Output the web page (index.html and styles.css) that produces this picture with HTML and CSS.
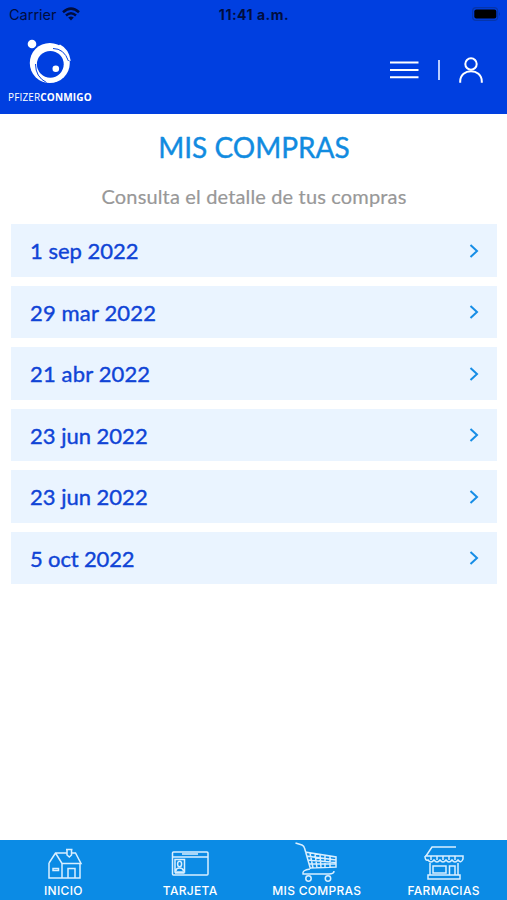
FILE: index.html
```html
<!DOCTYPE html>
<html lang="es">
<head>
<meta charset="utf-8">
<title>Mis compras</title>
<link rel="stylesheet" href="styles.css">
</head>
<body>
<header class="header">
  <div class="status">
    <div class="carrier"><span>Carrier</span>
      <svg width="18" height="14" viewBox="0 0 18 14"><g fill="none" stroke="currentColor" stroke-width="2.5"><path d="M1 5.2Q9-2 17 5.2"/><path d="M4 8.5Q9 4 14 8.5"/></g><path d="M6.2 10.6Q9 8.2 11.8 10.6L9 13.5Z" fill="currentColor"/></svg>
    </div>
    <time class="clock">11:41 a.m.</time>
    <svg class="battery" width="29" height="14" viewBox="0 0 29 14"><rect x=".6" y=".6" width="25" height="12.8" rx="3.5" fill="none" stroke="#0635aa" stroke-width="1.2"/><rect x="2.3" y="2.5" width="22" height="9" rx="2" fill="#000"/><path d="M27 5v4q2-2 0-4" fill="#0635aa"/></svg>
  </div>
  <div class="toolbar">
    <div class="brand">
      <svg width="46" height="48" viewBox="0 0 46 48"><circle cx="6" cy="6" r="4.3" fill="#fff"/><circle cx="23.8" cy="25" r="20" fill="#fff"/><circle cx="24.3" cy="26.3" r="13.4" fill="#003fe0"/><path d="M27 10.5Q38 10.500 42.500 23" fill="none" stroke="#003fe0" stroke-width="1"/><path d="M34 6.500Q43 11 44.800 23L42.800 22Q40 13 32 8Z" fill="#fff"/><path d="M9.500 26Q9.500 39 20.500 44.500" fill="none" stroke="#003fe0" stroke-width="1"/><circle cx="29.800" cy="30.800" r="3.300" fill="#fff"/></svg>
      <div class="brand-name">PFIZER<b>CONMIGO</b></div>
    </div>
    <div class="actions">
      <svg width="30" height="20" viewBox="0 0 30 20"><path d="M1 2.5H29.5M1 10H29.5M1 17.3H29.5" stroke="#fff" stroke-width="2"/></svg>
      <span class="divider"></span>
      <svg width="26" height="28" viewBox="0 0 26 28" fill="none" stroke="#fff" stroke-width="2"><circle cx="13" cy="8" r="5.7"/><path d="M2.2 26.7V25.5C2.2 11.8 23.8 11.8 23.8 25.5V26.7"/></svg>
    </div>
  </div>
</header>
<main class="content">
  <h1 class="title">MIS COMPRAS</h1>
  <p class="subtitle">Consulta el detalle de tus compras</p>
  <ul class="purchases">
    <li class="purchase"><span>1 sep 2022</span><svg class="chevron" viewBox="0 0 10 16"><path d="M1.5 2L8 8L1.5 14"/></svg></li>
    <li class="purchase"><span class="wide">29 mar 2022</span><svg class="chevron" viewBox="0 0 10 16"><path d="M1.5 2L8 8L1.5 14"/></svg></li>
    <li class="purchase"><span class="wide">21 abr 2022</span><svg class="chevron" viewBox="0 0 10 16"><path d="M1.5 2L8 8L1.5 14"/></svg></li>
    <li class="purchase"><span>23 jun 2022</span><svg class="chevron" viewBox="0 0 10 16"><path d="M1.5 2L8 8L1.5 14"/></svg></li>
    <li class="purchase"><span>23 jun 2022</span><svg class="chevron" viewBox="0 0 10 16"><path d="M1.5 2L8 8L1.5 14"/></svg></li>
    <li class="purchase"><span class="narrow">5 oct 2022</span><svg class="chevron" viewBox="0 0 10 16"><path d="M1.5 2L8 8L1.5 14"/></svg></li>
  </ul>
</main>
<nav class="tabs">
  <a class="tab"><svg class="icon" viewBox="0 0 46 42"><path d="M9 23L15.500 13H27M31.500 13H35.500L41 23.500H22L15.500 13M9 23V38H40V24M22 23.500V38M28 38V28.500H35V38M13 28.500H18.500V30.500H13ZM27 10V15L29.300 17L31.500 15V10M26 9.500H32.500"/></svg><span>INICIO</span></a>
  <a class="tab"><svg class="icon" viewBox="0 0 46 42"><rect x="5.5" y="12" width="35.500" height="23" rx="1"/><path d="M5.500 17H41M15 14H31M8 19.500H17.500V32H8ZM9 31Q9 28 12.500 28T16.500 31M8 33H17.500"/><ellipse cx="12.600" cy="24" rx="2" ry="2.800"/></svg><span>TARJETA</span></a>
  <a class="tab"><svg class="icon" viewBox="0 0 46 42"><path d="M1.500 3L8 5Q10 6 10.500 8L16.500 29M11 12L42 17V27L16 28M12 16L42 20M14 20L42 22.500M15 24H42M16 13L19 28M21 14L23 28M26 15L27 27.500M31 15.500V27.500M36 16V27.500M16 29Q8 30 9 34H35Q40 34 40 31"/><circle cx="14.500" cy="38.500" r="2.700"/><circle cx="34" cy="38.500" r="2.700"/></svg><span>MIS COMPRAS</span></a>
  <a class="tab"><svg class="icon" viewBox="0 0 46 42"><path d="M35 7H11L5 16M4 16H42V19Q40 24 37 20Q34 24 31 20Q28 24 25 20Q22 24 19 20Q16 24 13 20Q10 24 7 20Q4 21 4 16M10 16V20M16 16V20M22 16V20M28 16V20M34 16V20M9 23V35H37V23M7 35H39V39H7ZM12 26H25V33H12ZM28.500 35V26H34V35"/></svg><span>FARMACIAS</span></a>
</nav>
</body>
</html>
```
FILE: styles.css
```css
* { box-sizing: border-box; }
body { margin: 0; width: 507px; height: 900px; display: flex; flex-direction: column; background: #fff; font-family: Lato, sans-serif; overflow: hidden; }
svg { display: block; flex: none; }
.header { height: 114px; background: #003fe0; flex: none; }
.status { height: 28px; padding: 0 6px 0 9px; display: grid; grid-template-columns: 1fr auto 1fr; align-items: center; color: #010d3e; font-family: Inter, sans-serif; font-size: 14.5px; }
.carrier { display: flex; align-items: center; gap: 5px; }
.clock { font-weight: 700; font-size: 14px; letter-spacing: .5px; margin-left: -2px; }
.battery { justify-self: end; }
.toolbar { display: flex; justify-content: space-between; padding: 10px 23px 0 8px; }
.brand { width: 84px; }
.brand svg { margin-left: 18px; }
.brand-name { margin-top: 5px; font-family: "Open Sans", sans-serif; font-size: 10px; letter-spacing: .15px; line-height: 12px; color: #fff; white-space: nowrap; }
.actions { display: flex; align-items: center; gap: 18px; height: 64px; }
.divider { width: 2px; height: 20px; background: #b9ccff; margin-left: 1px; }
.content { flex: 1; padding: 14px 10px 0 11px; }
.title { margin: 0; font-size: 28px; line-height: 38px; font-weight: 400; text-align: center; color: #118be0; -webkit-text-stroke: .4px; }
.subtitle { margin: 15px 0 0; font-size: 20px; letter-spacing: .15px; line-height: 30px; text-align: center; color: #989898; white-space: nowrap; -webkit-text-stroke: .2px; }
.purchases { list-style: none; margin: 13px 0 0; padding: 0; display: grid; gap: 9px; }
.purchase { height: 52.5px; background: #eaf4ff; padding: 1px 18px 0 19px; display: flex; align-items: center; justify-content: space-between; color: #1044d6; font-size: 22px; -webkit-text-stroke: .4px; }
.wide { letter-spacing: .15px; }
.narrow { letter-spacing: -.15px; }
.chevron { width: 10px; height: 16px; fill: none; stroke: #168de6; stroke-width: 2; }
.tabs { height: 60px; background: #0b8be5; display: grid; grid-template-columns: repeat(4, 1fr); color: #fff; flex: none; }
.tab { display: flex; flex-direction: column; align-items: center; font: 500 12px/14px Inter, sans-serif; letter-spacing: .3px; }
.icon { width: 46px; height: 42px; margin-bottom: 2px; fill: none; stroke: #d9efff; stroke-width: 1.5; }
```
